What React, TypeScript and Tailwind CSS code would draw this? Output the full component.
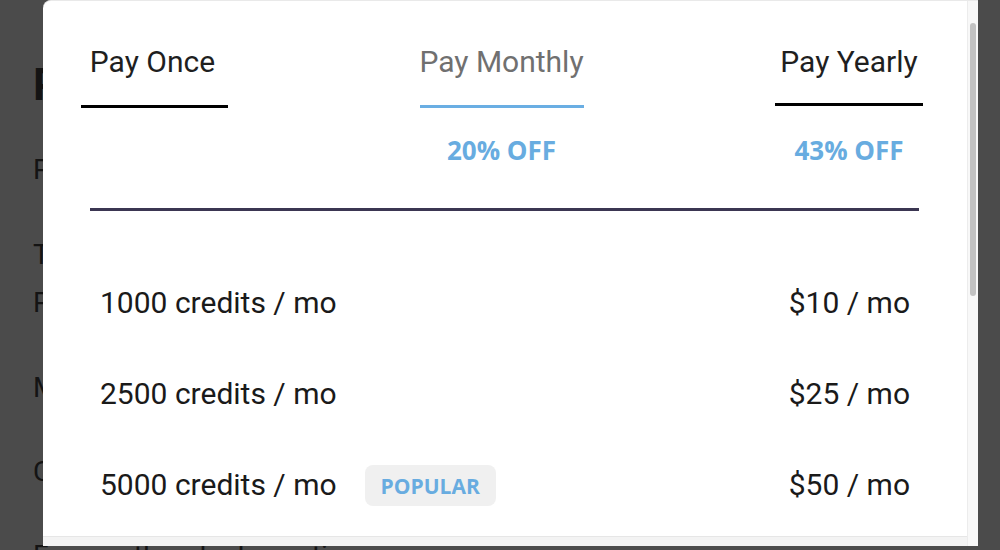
import React from "react";

const plans = [
  { credits: "1000 credits / mo", price: "$10 / mo", popular: false },
  { credits: "2500 credits / mo", price: "$25 / mo", popular: false },
  { credits: "5000 credits / mo", price: "$50 / mo", popular: true },
];

function BackgroundPage() {
  return (
    <div className="pl-[33px] pr-8 text-[#141414] font-['Roboto',sans-serif] whitespace-nowrap">
      <h1 className="pt-[59px] text-[44px] leading-[52px] font-bold">Pricing</h1>
      <p className="mt-[35px] text-[28px] leading-[48px]">Pick a plan</p>
      <p className="mt-[37px] text-[28px] leading-[48px]">
        The more
        <br />
        Prices
      </p>
      <p className="mt-[37px] text-[28px] leading-[48px]">Monthly</p>
      <p className="mt-[36px] text-[28px] leading-[48px]">Credits</p>
      <p className="mt-[36px] text-[28px] leading-[48px]">Frequently asked questions</p>
    </div>
  );
}

function PricingModal() {
  return (
    <div className="absolute left-[43px] top-0 w-[935px] h-[546px] flex bg-white rounded-tl-[8px] border-t border-[#e9e9e9] overflow-hidden font-['Roboto',sans-serif]">
      <div className="flex-1 flex flex-col min-w-0">
        <div className="flex-1 pl-[38px] pr-[44px] overflow-hidden">
          {/* tabs */}
          <div className="flex justify-between pt-[43px] whitespace-nowrap">
            <div className="w-[147px] flex flex-col items-center">
              <span className="pr-[4px] text-[30px] leading-[36px] text-[#1f1f1f]">Pay Once</span>
              <div className="mt-[25px] w-full h-[3px] bg-black" />
            </div>
            <div className="w-[164px] flex flex-col items-center">
              <span className="text-[30px] leading-[36px] text-[#707070]">Pay Monthly</span>
              <div className="mt-[25px] w-full h-[3px] bg-[#6aaee3]" />
              <span className="mt-[27px] text-[26px] leading-[30px] font-bold text-[#68ace0] font-['Open_Sans',sans-serif]">
                20% OFF
              </span>
            </div>
            <div className="w-[148px] flex flex-col items-center">
              <span className="text-[30px] leading-[36px] text-[#1f1f1f]">Pay Yearly</span>
              <div className="mt-[23px] w-full h-[3px] bg-black" />
              <span className="mt-[29px] text-[26px] leading-[30px] font-bold text-[#68ace0] font-['Open_Sans',sans-serif]">
                43% OFF
              </span>
            </div>
          </div>

          <div className="mt-[43px] ml-[9px] mr-[4px] h-[3px] bg-[#3b3652]" />

          {/* plans */}
          <div className="mt-[46px] ml-[19px] mr-[13px] whitespace-nowrap">
            {plans.map((p) => (
              <div key={p.credits} className="h-[91px] flex items-center text-[30px] leading-[36px] text-[#1a1a1a]">
                <span>{p.credits}</span>
                {p.popular && (
                  <span className="ml-[28px] mt-[2px] h-[41px] px-[16px] flex items-center rounded-[8px] bg-[#f0f0f0] text-[21px] font-bold text-[#68ace0] font-['Open_Sans',sans-serif]">
                    POPULAR
                  </span>
                )}
                <span className="ml-auto">{p.price}</span>
              </div>
            ))}
          </div>
        </div>
        <div className="h-[10px] shrink-0 bg-[#f3f3f3] border-t border-[#e6e6e6]" />
      </div>

      {/* scrollbar */}
      <div className="w-[11px] shrink-0 bg-[#f8f8f8] border-l border-[#ececec] pt-[22px] flex justify-center">
        <div className="w-[6px] h-[273px] rounded-full bg-[#c2c2c2]" />
      </div>
    </div>
  );
}

export default function App() {
  return (
    <div className="relative w-[1000px] h-[550px] overflow-hidden bg-[#4b4b4b]">
      <BackgroundPage />
      <PricingModal />
    </div>
  );
}
